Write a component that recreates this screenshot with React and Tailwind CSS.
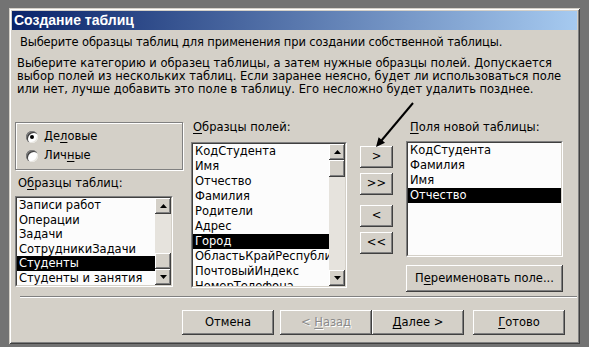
import React from "react";

const raised =
  "bg-[#d4d0c8] shadow-[inset_-1px_-1px_0_#404040,inset_1px_1px_0_#fff,inset_-2px_-2px_0_#808080]";

function U({ children }) {
  return <span className="underline decoration-1 underline-offset-2">{children}</span>;
}

function Btn({ className = "", disabled, children }) {
  return (
    <div
      className={`flex items-center justify-center ${raised} ${
        disabled ? "text-[#8a8a8a] [text-shadow:1px_1px_0_#fff]" : "text-black"
      } ${className}`}
    >
      {children}
    </div>
  );
}

function Arrow({ down }) {
  return (
    <svg width="7" height="4" viewBox="0 0 7 4">
      <path d={down ? "M0 0H7L3.5 4Z" : "M3.5 0L7 4H0Z"} fill="#000" />
    </svg>
  );
}

function ScrollBar({ spacer, thumb }) {
  return (
    <div className="flex w-[16px] flex-col bg-[#e6e3dd]">
      <Btn className="h-[16px] w-[16px] shrink-0">
        <Arrow />
      </Btn>
      <div className={`shrink-0 ${spacer}`} />
      <Btn className={`w-[16px] shrink-0 ${thumb}`} />
      <div className="flex-1" />
      <Btn className="h-[16px] w-[16px] shrink-0">
        <Arrow down />
      </Btn>
    </div>
  );
}

function ListBox({ items, selected, className, scroll, row = "h-[15px] leading-[15px]" }) {
  return (
    <div
      className={`border border-t-[#808080] border-l-[#808080] border-r-white border-b-white ${className}`}
    >
      <div className="flex h-full border border-t-[#404040] border-l-[#404040] border-r-[#d4d0c8] border-b-[#d4d0c8] bg-[#fcfcfc]">
        <div className="flex-1 overflow-hidden">
          {items.map((it) => (
            <div
              key={it}
              className={`whitespace-nowrap pl-[2px] ${row} ${
                it === selected ? "bg-black text-white" : "text-black"
              }`}
            >
              {it}
            </div>
          ))}
        </div>
        {scroll}
      </div>
    </div>
  );
}

function Radio({ checked }) {
  return (
    <div className="flex h-[12px] w-[12px] items-center justify-center rounded-full bg-white shadow-[inset_1px_1px_0_#808080,inset_2px_2px_0_#404040,inset_-1px_-1px_0_#e8e6e0]">
      {checked && <div className="h-[4px] w-[4px] rounded-full bg-black" />}
    </div>
  );
}

export default function App() {
  return (
    <div className="relative h-[347px] w-[589px] overflow-hidden bg-[#737373] pl-[9px] pt-[8px] font-['DejaVu_Sans',sans-serif] text-[11.5px] text-black">
      <div className="flex h-[336px] w-[571px] flex-col bg-[#d4d0c8] p-[3px] shadow-[inset_1px_1px_0_#d4d0c8,inset_-1px_-1px_0_#404040,inset_2px_2px_0_#fff,inset_-2px_-2px_0_#808080]">
        <div className="flex h-[19px] shrink-0 items-center bg-[linear-gradient(to_right,#0a246a,#a6caf0)] pl-[2px] font-['Liberation_Sans',sans-serif] text-[14px] font-bold text-white">
          Создание таблиц
        </div>

        <div className="mt-[6px] h-[13px] pl-[8px] leading-[13px] tracking-[-0.15px]">
          Выберите образцы таблиц для применения при создании собственной таблицы.
        </div>
        <div className="mt-[8px] pl-[5px] leading-[13px]">
          <div>Выберите категорию и образец таблицы, а затем нужные образцы полей. Допускается</div>
          <div>выбор полей из нескольких таблиц. Если заранее неясно, будет ли использоваться поле</div>
          <div>или нет, лучше добавить это поле в таблицу. Его несложно будет удалить позднее.</div>
        </div>

        <div className="mt-[25px] flex items-start">
          <div className="ml-[3px] flex w-[168px] flex-col">
            <div className="mt-[1px] flex h-[48px] flex-col gap-[4px] border border-[#808080] pl-[10px] pt-[6px] shadow-[inset_1px_1px_0_#fff,1px_1px_0_#fff]">
              <div className="flex h-[15px] items-center gap-[6px]">
                <Radio checked />
                <span>
                  Де<U>л</U>овые
                </span>
              </div>
              <div className="flex h-[15px] items-center gap-[6px]">
                <Radio />
                <span>
                  Лич<U>н</U>ые
                </span>
              </div>
            </div>
            <div className="mt-[7px] h-[13px] pl-[3px] leading-[13px]">
              О<U>б</U>разцы таблиц:
            </div>
            <ListBox
              className="mt-[6px] h-[91px] w-[158px]"
              row="h-[14.5px] leading-[14.5px]"
              items={["Записи работ", "Операции", "Задачи", "СотрудникиЗадачи", "Студенты", "Студенты и занятия"]}
              selected="Студенты"
              scroll={<ScrollBar spacer="h-[39px]" thumb="h-[16px]" />}
            />
          </div>

          <div className="ml-[8px] flex w-[156px] flex-col">
            <div className="h-[13px] pl-[2px] leading-[13px]">
              <U>О</U>бразцы полей:
            </div>
            <ListBox
              className="mt-[8px] h-[146px] w-[156px]"
              items={[
                "КодСтудента",
                "Имя",
                "Отчество",
                "Фамилия",
                "Родители",
                "Адрес",
                "Город",
                "ОбластьКрайРеспублика",
                "ПочтовыйИндекс",
                "НомерТелефона",
              ]}
              selected="Город"
              scroll={<ScrollBar spacer="h-0" thumb="h-[17px]" />}
            />
          </div>

          <div className="ml-[13px] mt-[25px] flex w-[33px] flex-col">
            <Btn className="h-[22px]">&gt;</Btn>
            <Btn className="mt-[5px] h-[22px]">&gt;&gt;</Btn>
            <Btn className="mt-[10px] h-[22px]">&lt;</Btn>
            <Btn className="mt-[5px] h-[22px]">&lt;&lt;</Btn>
          </div>

          <div className="ml-[13px] flex w-[157px] flex-col">
            <div className="h-[13px] pl-[4px] leading-[13px]">
              <U>П</U>оля новой таблицы:
            </div>
            <ListBox
              className="mt-[7px] h-[116px] w-[157px]"
              items={["КодСтудента", "Фамилия", "Имя", "Отчество"]}
              selected="Отчество"
            />
            <Btn className="mt-[8px] h-[27px]">
              <span>
                П<U>е</U>реименовать поле...
              </span>
            </Btn>
          </div>
        </div>

        <div className="ml-[8px] mt-[4px] h-[2px] border-t border-b border-t-[#808080] border-b-white" />

        <div className="ml-[170px] mt-[12px] flex">
          <Btn className="h-[25px] w-[92px]">Отмена</Btn>
          <Btn className="ml-[6px] h-[25px] w-[92px]" disabled>
            <span>
              &lt; <U>Н</U>азад
            </span>
          </Btn>
          <Btn className="h-[25px] w-[92px]">
            <span>
              <U>Д</U>алее &gt;
            </span>
          </Btn>
          <Btn className="ml-[9px] h-[25px] w-[92px]">
            <span>
              <U>Г</U>отово
            </span>
          </Btn>
        </div>
      </div>

      <svg className="pointer-events-none absolute left-0 top-0" width="589" height="347">
        <line x1="413" y1="103" x2="381.5" y2="140.5" stroke="#000" strokeWidth="2" />
        <polygon points="376,147 385,142.7 378.6,137.3" fill="#000" />
      </svg>
    </div>
  );
}
